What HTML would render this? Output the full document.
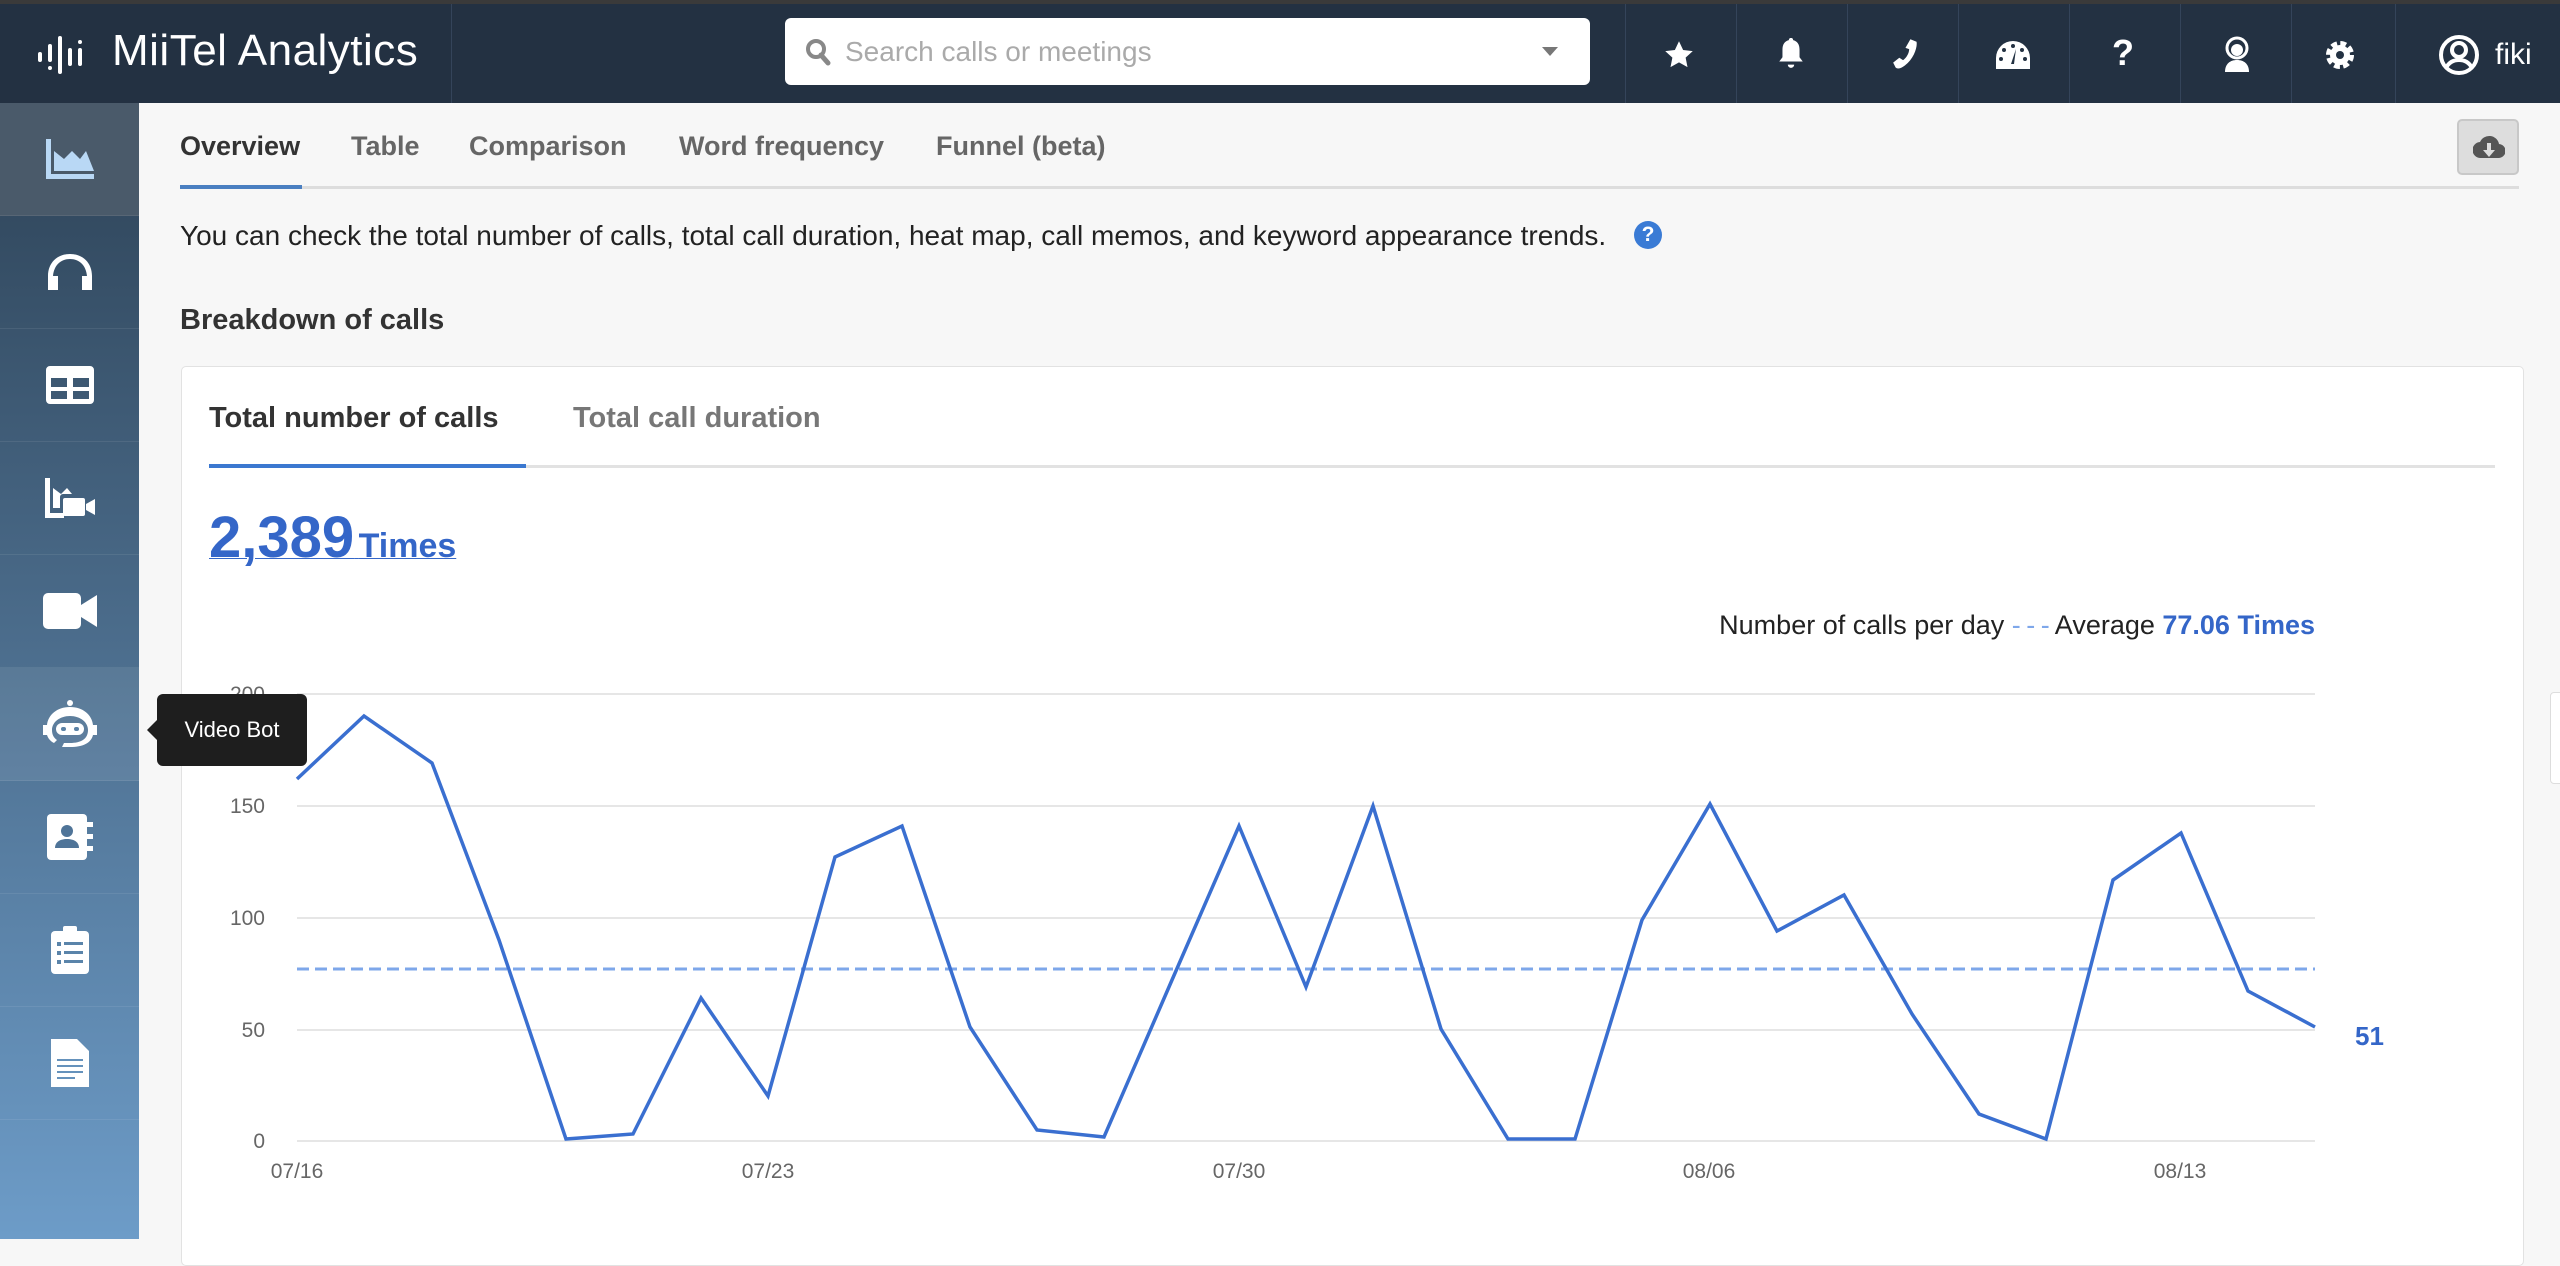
<!DOCTYPE html>
<html><head><meta charset="utf-8"><style>
*{margin:0;padding:0;box-sizing:border-box}
body{width:2560px;height:1239px;overflow:hidden;background:#f7f7f7;font-family:"Liberation Sans",sans-serif;position:relative;color:#333}
.abs{position:absolute}
#hdr{left:0;top:0;width:2560px;height:103px;background:#233142;border-top:4px solid #3a3a3a}
.cell{position:absolute;top:0;height:99px;border-left:1px solid #34445a}
#side{left:0;top:103px;width:139px;height:1136px;background:linear-gradient(#2d4256,#6d9cc8)}
.si{position:absolute;left:0;width:139px;height:113px;border-bottom:1px solid rgba(255,255,255,0.08);display:flex;align-items:center;justify-content:center}
.tab{position:absolute;top:131px;font-size:27px;font-weight:bold;color:#666}
</style></head><body>
<div id="hdr" class="abs">
 <svg class="abs" style="left:38px;top:28px" width="60" height="48" viewBox="0 0 60 48" fill="#fff"><rect x="0" y="20" width="4" height="10" rx="2"/><rect x="10" y="12" width="4" height="18" rx="2"/><rect x="10" y="34" width="4" height="4" rx="2"/><rect x="20" y="4" width="4" height="38" rx="2"/><rect x="30" y="16" width="4" height="18" rx="2"/><rect x="40" y="8" width="4" height="4" rx="2"/><rect x="40" y="16" width="4" height="18" rx="2"/></svg>
 <div class="abs" style="left:112px;top:22px;font-size:44px;color:#fff;letter-spacing:0.5px">MiiTel Analytics</div>
 <div class="cell" style="left:451px"></div>
 <div class="abs" style="left:785px;top:14px;width:805px;height:67px;background:#fff;border-radius:6px">
  <svg class="abs" style="left:20px;top:20px" width="26" height="28" viewBox="0 0 26 28"><circle cx="11" cy="11" r="8" fill="none" stroke="#888" stroke-width="4"/><path d="M16 17l7 8" stroke="#888" stroke-width="5" stroke-linecap="round"/></svg>
  <div class="abs" style="left:60px;top:18px;font-size:28px;color:#aaa">Search calls or meetings</div>
  <svg class="abs" style="left:757px;top:29px" width="16" height="10"><path d="M0 0h16L8 9z" fill="#777"/></svg>
 </div>
 <div class="cell" style="left:1625px"></div><div class="cell" style="left:1736px"></div><div class="cell" style="left:1847px"></div><div class="cell" style="left:1958px"></div><div class="cell" style="left:2069px"></div><div class="cell" style="left:2180px"></div><div class="cell" style="left:2291px"></div><div class="cell" style="left:2395px"></div>
 <svg class="abs" style="left:1664px;top:36px" width="30" height="30" viewBox="0 0 24 24" fill="#fff"><path d="M12 1l3.3 7 7.7.9-5.7 5.2 1.5 7.6L12 17.9 5.2 21.7l1.5-7.6L1 8.9l7.7-.9z"/></svg>
 <svg class="abs" style="left:1778px;top:34px" width="26" height="32" viewBox="0 0 24 30" fill="#fff"><path d="M12 0c1.5 0 2 1 2 2 4 1 6 4 6 9v7l3 4H1l3-4v-7c0-5 2-8 6-9 0-1 .5-2 2-2zM9 25h6a3 3 0 0 1-6 0z"/></svg>
 <svg class="abs" style="left:1888px;top:34px" width="30" height="32" viewBox="0 0 24 26" fill="#fff"><path d="M18 1l5 2c1 5-3 16-12 21-2 1-4 1-5 0L4 20l5-4 3 2c3-2 5-6 5-9l-3-1z"/></svg>
 <svg class="abs" style="left:1996px;top:36px" width="34" height="30" viewBox="0 0 34 28" fill="#fff"><path d="M17 0a17 17 0 0 1 17 17v11H0V17A17 17 0 0 1 17 0z"/><g fill="#233142"><circle cx="17" cy="5" r="2"/><circle cx="8" cy="9" r="2"/><circle cx="26" cy="9" r="2"/><circle cx="5" cy="18" r="2"/><circle cx="29" cy="18" r="2"/><path d="M20 8l-2 15h-3z"/></g></svg>
 <div class="abs" style="left:2112px;top:28px;font-size:36px;font-weight:bold;color:#fff">?</div>
 <svg class="abs" style="left:2222px;top:32px" width="30" height="36" viewBox="0 0 30 36" fill="#fff"><circle cx="15" cy="12" r="10" fill="none" stroke="#fff" stroke-width="3"/><circle cx="15" cy="14" r="6"/><path d="M3 36c0-8 5-12 12-12s12 4 12 12z"/></svg>
 <svg class="abs" style="left:2325px;top:36px" width="30" height="30" viewBox="0 0 30 30"><circle cx="15" cy="15" r="10" fill="none" stroke="#fff" stroke-width="8" stroke-dasharray="5 2.85"/><circle cx="15" cy="15" r="10" fill="#fff"/><circle cx="15" cy="15" r="4" fill="#233142"/></svg>
 <svg class="abs" style="left:2438px;top:30px" width="42" height="42" viewBox="0 0 42 42"><circle cx="21" cy="21" r="18" fill="none" stroke="#fff" stroke-width="4"/><circle cx="21" cy="16" r="7" fill="none" stroke="#fff" stroke-width="4"/><path d="M8 34c3-6 8-8 13-8s10 2 13 8" fill="none" stroke="#fff" stroke-width="4"/></svg>
 <div class="abs" style="left:2495px;top:34px;font-size:30px;color:#fff">fiki</div>
</div>

<div id="side" class="abs">
 <div class="si" style="top:0;background:#4a5a6a"><svg width="48" height="40" viewBox="0 0 48 40" fill="#b9d8f5"><path d="M0 0h5v35h43v5H0z"/><path d="M8 32V12l10 8 8-8 8 8 6-8 8 20z"/></svg></div>
 <div class="si" style="top:113px"><svg width="48" height="40" viewBox="0 0 48 40" fill="#fff"><path d="M24 2C11 2 2 11 2 24v14h10V24H7C8 13 15 7 24 7s16 6 17 17h-5v14h10V24C46 11 37 2 24 2z"/></svg></div>
 <div class="si" style="top:226px"><svg width="48" height="38" viewBox="0 0 48 38" fill="#fff"><path d="M0 4a4 4 0 0 1 4-4h40a4 4 0 0 1 4 4v30a4 4 0 0 1-4 4H4a4 4 0 0 1-4-4zM5 12v9h16v-9zm22 0v9h16v-9zM5 25v8h16v-8zm22 0v8h16v-8z"/></svg></div>
 <div class="si" style="top:339px"><svg width="50" height="40" viewBox="0 0 50 40" fill="#fff"><path d="M0 0h5v35h14v5H0z"/><path d="M8 30V10l8 6 6-6 5 6H18a3 3 0 0 0-3 3v11z"/><rect x="18" y="20" width="22" height="18" rx="2"/><path d="M41 26l9-5v16l-9-5z"/></svg></div>
 <div class="si" style="top:452px"><svg width="54" height="36" viewBox="0 0 54 36" fill="#fff"><rect x="0" y="0" width="38" height="36" rx="5"/><path d="M38 12l16-10v32L38 24z"/></svg></div>
 <div class="si" style="top:565px;background:rgba(255,255,255,0.08)"><svg width="60" height="50" viewBox="0 0 60 50" fill="#fff"><circle cx="30" cy="4" r="3"/><path d="M30 8c13 0 22 8 23 18h4v10h-4c-2 8-10 12-23 12H22l2-4h6c11 0 18-4 18-13 0-8-8-14-18-14S12 23 12 31c0 5 2 8 5 10l-3 3c-4-2-6-5-7-8H3V26h4C8 16 17 8 30 8z"/><rect x="16" y="24" width="28" height="12" rx="6"/><g fill="#5b82a6"><rect x="21" y="28" width="5" height="4" rx="2"/><rect x="34" y="28" width="5" height="4" rx="2"/></g></svg></div>
 <div class="si" style="top:678px"><svg width="46" height="46" viewBox="0 0 46 46" fill="#fff"><rect x="0" y="0" width="40" height="46" rx="4"/><rect x="40" y="8" width="6" height="5"/><rect x="40" y="20" width="6" height="5"/><rect x="40" y="32" width="6" height="5"/><g fill="#4f7498"><circle cx="20" cy="17" r="6"/><path d="M8 34c0-6 5-9 12-9s12 3 12 9z"/></g></svg></div>
 <div class="si" style="top:791px"><svg width="38" height="48" viewBox="0 0 38 48" fill="#fff"><rect x="0" y="5" width="38" height="43" rx="4"/><rect x="12" y="0" width="14" height="8" rx="2"/><g fill="#5a84aa"><rect x="6" y="16" width="4" height="4"/><rect x="13" y="16" width="19" height="3"/><rect x="6" y="25" width="4" height="4"/><rect x="13" y="25" width="19" height="3"/><rect x="6" y="34" width="4" height="4"/><rect x="13" y="34" width="19" height="3"/></g></svg></div>
 <div class="si" style="top:904px"><svg width="38" height="48" viewBox="0 0 38 48" fill="#fff"><path d="M0 0h26l12 12v36H0z"/><g fill="#6592bc"><rect x="6" y="20" width="26" height="2"/><rect x="6" y="26" width="26" height="2"/><rect x="6" y="32" width="26" height="2"/><rect x="6" y="38" width="18" height="2"/></g></svg></div>
</div>

<div class="tab" style="left:180px;color:#333">Overview</div>
<div class="tab" style="left:351px">Table</div>
<div class="tab" style="left:469px">Comparison</div>
<div class="tab" style="left:679px">Word frequency</div>
<div class="tab" style="left:936px">Funnel (beta)</div>
<div class="abs" style="left:180px;top:186px;width:2339px;height:3px;background:#ddd"></div>
<div class="abs" style="left:180px;top:185px;width:122px;height:4px;background:#4a7fc1"></div>
<div class="abs" style="left:2457px;top:119px;width:62px;height:56px;background:#ddd;border:2px solid #c8c8c8;border-radius:5px"><svg class="abs" style="left:14px;top:13px" width="32" height="26" viewBox="0 0 32 26" fill="#555"><path d="M8 24a8 8 0 0 1-1-16 10 10 0 0 1 19 2 7 7 0 0 1-1 14z"/><path d="M14 9h4v7h4l-6 7-6-7h4z" fill="#ddd"/></svg></div>

<div class="abs" style="left:180px;top:220px;font-size:28px;color:#222;white-space:nowrap">You can check the total number of calls, total call duration, heat map, call memos, and keyword appearance trends.</div>
<div class="abs" style="left:1634px;top:221px;width:28px;height:28px;border-radius:50%;background:#3a7bd5;color:#fff;font-size:21px;font-weight:bold;text-align:center;line-height:28px">?</div>
<div class="abs" style="left:180px;top:304px;font-size:29px;font-weight:bold;color:#333">Breakdown of calls</div>

<div class="abs" style="left:181px;top:366px;width:2343px;height:900px;background:#fff;border:1px solid #e2e2e2;border-radius:5px"></div>
<div class="abs" style="left:209px;top:402px;font-size:29px;font-weight:bold;color:#333">Total number of calls</div>
<div class="abs" style="left:573px;top:402px;font-size:29px;font-weight:bold;color:#777">Total call duration</div>
<div class="abs" style="left:209px;top:465px;width:2286px;height:3px;background:#e2e2e2"></div>
<div class="abs" style="left:209px;top:464px;width:317px;height:4px;background:#3b78d0"></div>
<div class="abs" style="left:209px;top:504px;color:#3466c8;text-decoration:underline;white-space:nowrap"><span style="font-size:58px;font-weight:bold">2,389</span> <span style="font-size:34px;font-weight:bold">Times</span></div>

<div class="abs" style="right:245px;top:610px;font-size:27px;color:#222;white-space:nowrap">Number of calls per day <span style="color:#7ea7ea;letter-spacing:-1px">- - -</span> Average <span style="color:#3466c8;font-weight:bold">77.06 Times</span></div>

<svg class="abs" style="left:0;top:0" width="2560" height="1239">
 <g stroke="#e6e6e6" stroke-width="2"><line x1="297" y1="694" x2="2315" y2="694"/><line x1="297" y1="806" x2="2315" y2="806"/><line x1="297" y1="918" x2="2315" y2="918"/><line x1="297" y1="1030" x2="2315" y2="1030"/><line x1="297" y1="1141" x2="2315" y2="1141"/></g>
 <g font-family="Liberation Sans" font-size="21" fill="#666" text-anchor="end"><text x="265" y="701">200</text><text x="265" y="813">150</text><text x="265" y="925">100</text><text x="265" y="1037">50</text><text x="265" y="1148">0</text></g>
 <g font-family="Liberation Sans" font-size="21" fill="#666" text-anchor="middle"><text x="297" y="1178">07/16</text><text x="768" y="1178">07/23</text><text x="1239" y="1178">07/30</text><text x="1709" y="1178">08/06</text><text x="2180" y="1178">08/13</text></g>
 <line x1="297" y1="969" x2="2315" y2="969" stroke="#7ea7ea" stroke-width="3" stroke-dasharray="12 6"/>
 <polyline fill="none" stroke="#3a6fd0" stroke-width="3.5" stroke-linejoin="miter" points="297,779 364,716 432,763 499,940 566,1139 633,1134 701,998 768,1096 835,857 902,826 970,1027 1037,1130 1104,1137 1172,980 1239,826 1306,987 1373,806 1441,1029 1508,1139 1575,1139 1642,920 1710,804 1777,931 1844,895 1912,1014 1979,1114 2046,1139 2113,880 2181,833 2248,991 2315,1027"/>
 <text x="2355" y="1045" font-family="Liberation Sans" font-size="26" font-weight="bold" fill="#3466c8">51</text>
</svg>

<div class="abs" style="left:157px;top:694px;width:150px;height:72px;background:#1e1e1e;border-radius:6px;color:#fff;font-size:22px;line-height:72px;text-align:center">Video Bot</div>
<div class="abs" style="left:147px;top:720px;width:0;height:0;border-top:10px solid transparent;border-bottom:10px solid transparent;border-right:10px solid #1e1e1e"></div>
<div class="abs" style="left:2550px;top:692px;width:12px;height:92px;background:#fff;border:1px solid #ddd;border-radius:4px 0 0 4px"></div>
</body></html>
